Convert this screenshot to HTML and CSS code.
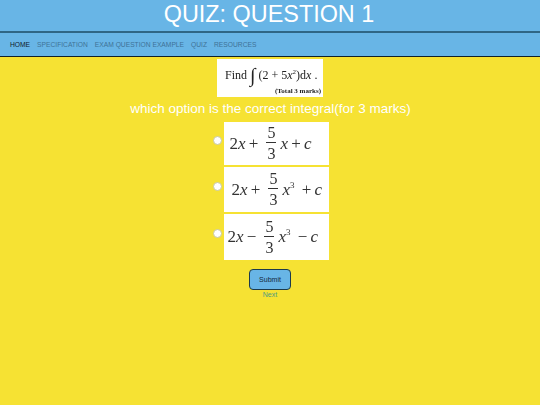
FILE: index.html
```html
<!DOCTYPE html>
<html lang="en">
<head>
<meta charset="utf-8">
<title>Quiz: Question 1</title>
<link rel="stylesheet" href="styles.css">
</head>
<body>
<header class="banner"><h1>QUIZ: QUESTION 1</h1></header>
<nav class="nav">
  <a class="active" href="#">HOME</a>
  <a href="#">SPECIFICATION</a>
  <a href="#">EXAM QUESTION EXAMPLE</a>
  <a href="#">QUIZ</a>
  <a href="#">RESOURCES</a>
</nav>
<main class="quiz">
  <div class="question">
    <div class="q-line"><span>Find</span><span class="integral">∫</span><span>(2 + 5<i>x</i><sup>2</sup>)d<i>x</i> .</span></div>
    <div class="q-marks">(Total 3 marks)</div>
  </div>
  <p class="prompt">which option is the correct integral(for 3 marks)</p>
  <form class="options">
    <label class="option">
      <input type="radio" name="answer">
      <span class="card first"><span>2<i>x</i> +</span><span class="frac"><span class="num">5</span><span class="den">3</span></span><span><i>x</i> + <i>c</i></span></span>
    </label>
    <label class="option">
      <input type="radio" name="answer">
      <span class="card second"><span>2<i>x</i> +</span><span class="frac"><span class="num">5</span><span class="den">3</span></span><span><i>x</i><sup>3</sup> + <i>c</i></span></span>
    </label>
    <label class="option">
      <input type="radio" name="answer">
      <span class="card third"><span>2<i>x</i> −</span><span class="frac"><span class="num">5</span><span class="den">3</span></span><span><i>x</i><sup>3</sup> − <i>c</i></span></span>
    </label>
    <button class="submit" type="button">Submit</button>
    <a class="next" href="#">Next</a>
  </form>
</main>
</body>
</html>
```
FILE: styles.css
```css
* { box-sizing: border-box; }
html, body { margin: 0; height: 100%; }
body {
  background: #f6e233;
  font-family: "Liberation Sans", Arial, sans-serif;
  overflow: hidden;
}
.banner {
  height: 33px;
  background: #68b5e6;
  border-bottom: 2px solid #2f6685;
}
.banner h1 {
  margin: 0;
  padding-right: 2px;
  font-size: 23.4px;
  line-height: 28px;
  font-weight: 400;
  color: #fff;
  text-align: center;
}
.nav {
  height: 24px;
  background: #68b5e6;
  border-bottom: 1px solid #10202a;
  display: flex;
  align-items: center;
  gap: 7px;
  padding: 0 0 1px 10px;
  font-size: 6.7px;
}
.nav a { color: #3f7296; text-decoration: none; }
.nav a.active { color: #10202c; }
.quiz {
  display: flex;
  flex-direction: column;
  align-items: center;
  padding-top: 2px;
}
.question {
  width: 106px;
  height: 38px;
  background: #fff;
  font-family: "Liberation Serif", serif;
  color: #222;
  padding: 6px 2px 0 8px;
  filter: blur(0.3px);
}
.q-line { display: flex; align-items: center; gap: 3px; font-size: 12px; line-height: 20px; white-space: nowrap; }
.integral { font-size: 20px; line-height: 20px; }
.q-line sup { font-size: 7px; line-height: 0; }
.q-marks { font-size: 7px; font-weight: 700; line-height: 9px; text-align: right; margin-top: 2px; }
.prompt {
  margin: 4px 0 0;
  padding-left: 1px;
  font-size: 13.5px;
  line-height: 16px;
  color: #fff;
  text-align: center;
}
.options {
  display: flex;
  flex-direction: column;
  align-items: center;
  margin-top: 5px;
}
.option { display: flex; align-items: center; gap: 2px; margin-left: 1px; margin-bottom: 2px; }
.option input {
  appearance: none;
  width: 9px;
  height: 9px;
  margin: 0 0 7px;
  border-radius: 50%;
  background: #fff;
  border: 1px solid #c8c8a0;
}
.card {
  width: 105px;
  background: #fff;
  font-family: "Liberation Serif", serif;
  color: #333;
  font-size: 17px;
  word-spacing: -1px;
  display: flex;
  align-items: center;
  gap: 3px;
  padding-left: 6px;
  white-space: nowrap;
  filter: blur(0.3px);
}
.card.first { height: 43px; }
.card.second { height: 45px; padding-left: 8px; }
.card.third { height: 46px; padding-left: 4px; }
.card sup { font-size: 9px; line-height: 0; margin-right: 4px; }
.frac { display: inline-flex; flex-direction: column; align-items: center; margin: 0 1px 0 5px; font-size: 16px; line-height: 18px; }
.num { border-bottom: 1px solid #333; padding: 0 1px; }
.den { padding-top: 2px; }
.submit {
  width: 42px;
  height: 21px;
  margin-top: 7px;
  background: #68b5e6;
  border: 1px solid #1d3a4a;
  border-radius: 4px;
  font: 7px "Liberation Sans", Arial, sans-serif;
  color: #14283a;
  padding: 0;
}
.next { font-size: 7px; line-height: 9px; color: #4f9a80; text-decoration: none; }
```
